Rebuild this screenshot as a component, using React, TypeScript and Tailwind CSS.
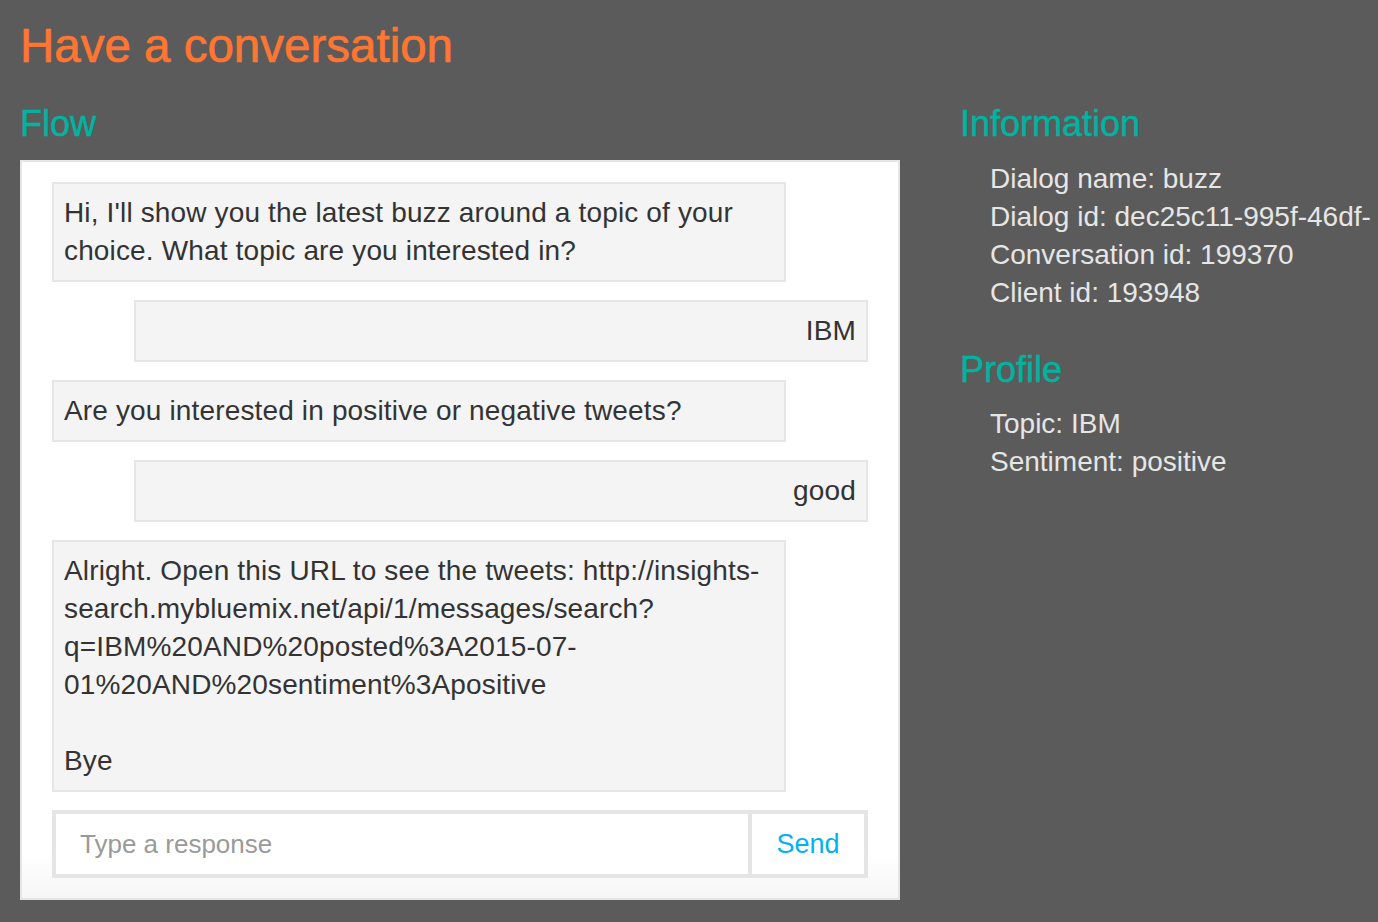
import React from 'react';

interface Message {
  id: number;
  from: 'bot' | 'user';
  lines: string[];
}

const messages: Message[] = [
  {
    id: 1,
    from: 'bot',
    lines: ["Hi, I'll show you the latest buzz around a topic of your choice. What topic are you interested in?"],
  },
  { id: 2, from: 'user', lines: ['IBM'] },
  { id: 3, from: 'bot', lines: ['Are you interested in positive or negative tweets?'] },
  { id: 4, from: 'user', lines: ['good'] },
  {
    id: 5,
    from: 'bot',
    lines: [
      'Alright. Open this URL to see the tweets: http://insights-',
      'search.mybluemix.net/api/1/messages/search?',
      'q=IBM%20AND%20posted%3A2015-07-',
      '01%20AND%20sentiment%3Apositive',
      '',
      'Bye',
    ],
  },
];

const info = ['Dialog name: buzz', 'Dialog id: dec25c11-995f-46df-', 'Conversation id: 199370', 'Client id: 193948'];

const profile = ['Topic: IBM', 'Sentiment: positive'];

const Bubble: React.FC<{ msg: Message }> = ({ msg }) => {
  const isUser = msg.from === 'user';
  return (
    <div
      className={`w-[90%] border-2 border-[#e6e6e6] bg-[#f4f4f4] p-[10px] text-[28px] leading-[38px] tracking-[0.15px] text-[#333333] ${
        isUser ? 'self-end text-right' : 'self-start'
      }`}
    >
      {msg.lines.map((line, i) => (
        <React.Fragment key={i}>
          {line === '' ? <span>&nbsp;</span> : line}
          {i < msg.lines.length - 1 && <br />}
        </React.Fragment>
      ))}
    </div>
  );
};

export default function App() {
  return (
    <div className="w-full h-screen overflow-hidden bg-[#5b5b5b] px-5 pt-[18px] font-['Liberation_Sans',Arial,sans-serif]">
      <h1 className="text-[47.5px] leading-[56px] text-[#fe7632] [-webkit-text-stroke:0.7px]">Have a conversation</h1>

      <div className="flex mt-[30px]">
        {/* Flow column */}
        <div className="w-[880px] shrink-0">
          <h2 className="text-[36px] leading-[40px] text-[#00b4a0] [-webkit-text-stroke:0.5px]">Flow</h2>
          <div className="mt-4 border-2 border-[#e5e5e5] bg-gradient-to-b from-white from-[94%] to-[#f6f6f6] px-[30px] py-5 flex flex-col gap-[18px]">
            {messages.map((m) => (
              <Bubble key={m.id} msg={m} />
            ))}

            <div className="flex h-[68px] border-4 border-[#e5e5e5] bg-white">
              <input
                className="flex-1 min-w-0 pl-6 pr-4 text-[26px] text-[#333333] placeholder:text-[#9a9a9a] outline-none bg-transparent"
                placeholder="Type a response"
              />
              <button className="w-[116px] border-l-4 border-[#e5e5e5] text-[27px] text-[#00b2ef]">Send</button>
            </div>
          </div>
        </div>

        {/* Information column */}
        <div className="ml-[60px] whitespace-nowrap">
          <h2 className="text-[36px] leading-[40px] text-[#00b4a0] [-webkit-text-stroke:0.5px]">Information</h2>
          <ul className="mt-4 pl-[30px] text-[28px] leading-[38px] text-[#e6e6e6]">
            {info.map((t) => (
              <li key={t}>{t}</li>
            ))}
          </ul>

          <h2 className="mt-[38px] text-[36px] leading-[40px] text-[#00b4a0] [-webkit-text-stroke:0.5px]">Profile</h2>
          <ul className="mt-[15px] pl-[30px] text-[28px] leading-[38px] text-[#e6e6e6]">
            {profile.map((t) => (
              <li key={t}>{t}</li>
            ))}
          </ul>
        </div>
      </div>
    </div>
  );
}
